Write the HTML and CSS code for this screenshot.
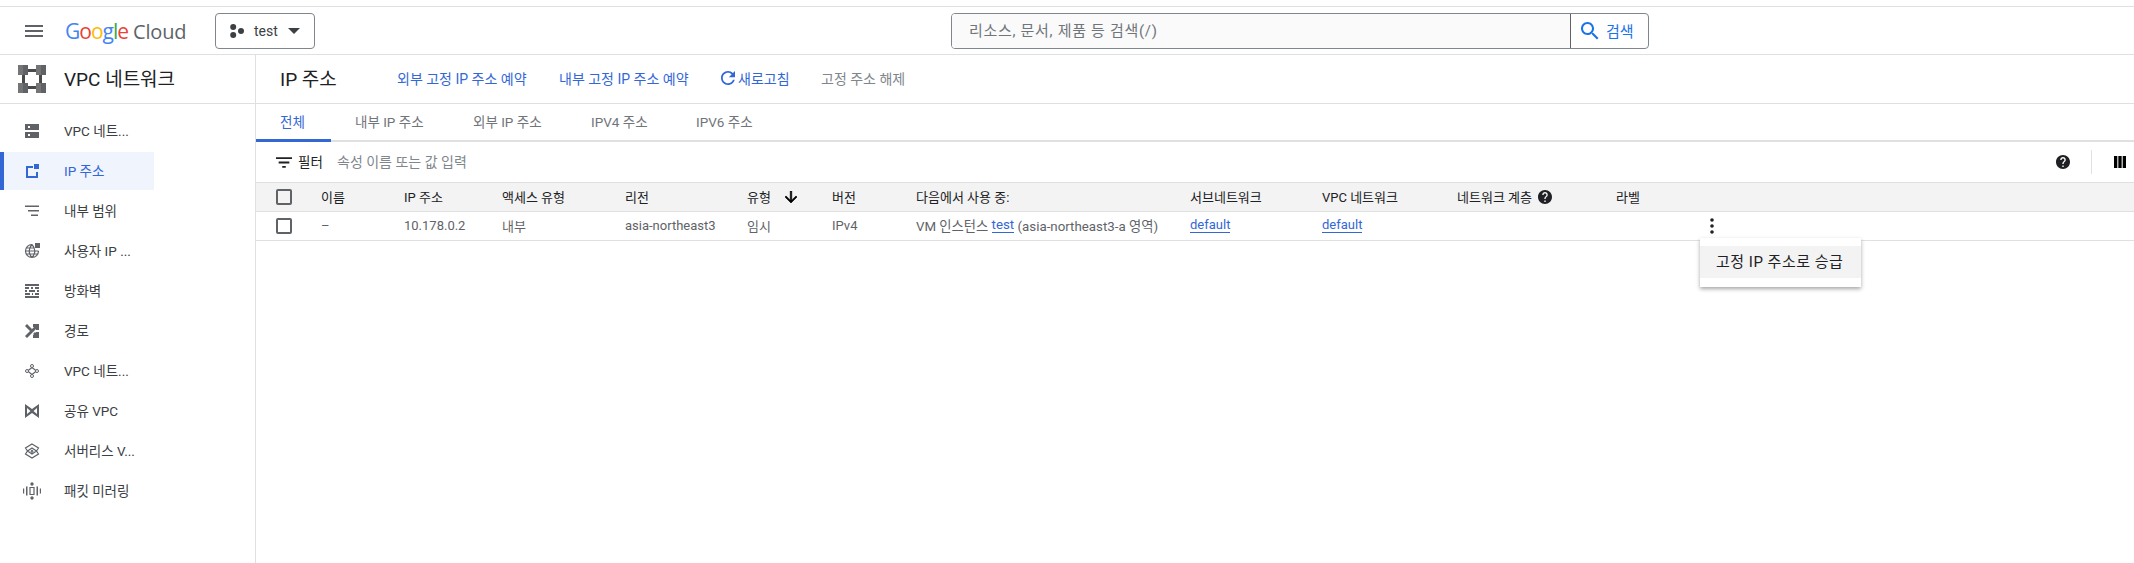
FILE: index.html
```html
<!DOCTYPE html>
<html lang="ko">
<head>
<meta charset="utf-8">
<title>IP 주소</title>
<link rel="stylesheet" href="styles.css">
</head>
<body>
<div class="topgap"></div>
<header class="topbar">
  <svg class="menu-icon" viewBox="0 0 24 24"><path d="M3 18h18v-2H3v2zm0-5h18v-2H3v2zm0-7v2h18V6H3z"/></svg>
  <div class="logo"><span class="g-b">G</span><span class="g-r">o</span><span class="g-y">o</span><span class="g-b">g</span><span class="g-g">l</span><span class="g-r">e</span><span class="logo-cloud">Cloud</span></div>
  <button class="project">
    <svg class="project-dots" viewBox="0 0 14 14"><circle cx="3.200" cy="3" r="3"/><circle cx="3.200" cy="11" r="3"/><circle cx="11" cy="7" r="3"/></svg>
    <span>test</span>
    <svg class="caret" viewBox="0 0 12 6"><path d="M0 0l6 6 6-6z"/></svg>
  </button>
  <div class="search">
    <div class="search-input">리소스, 문서, 제품 등 검색(/)</div>
    <div class="search-btn">
      <svg viewBox="3 3 18 18"><path d="M15.500 14h-.79l-.28-.27C15.410 12.590 16 11.110 16 9.500 16 5.910 13.090 3 9.500 3S3 5.910 3 9.500 5.910 16 9.500 16c1.610 0 3.090-.59 4.230-1.570l.27.28v.79l5 4.990L20.490 19l-4.990-5zm-6 0C7.010 14 5 11.990 5 9.500S7.010 5 9.500 5 14 7.010 14 9.500 11.990 14 9.500 14z"/></svg>
      <span>검색</span>
    </div>
  </div>
</header>
<div class="main">
  <aside class="sidebar">
    <div class="side-head">
      <svg class="vpc-logo" viewBox="0 0 28 28">
        <path class="lg-bar" d="M8 4h12v3H8zM8 21h12v3H8zM4 8h3v12H4zM21 8h3v12h-3z"/>
        <path class="lg-l" d="M0 0h5v10H0zM18 0h5v10h-5zM0 18h5v10H0zM18 18h5v10h-5z"/>
        <path class="lg-d" d="M5 0h5v10H5zM23 0h5v10h-5zM5 18h5v10H5zM23 18h5v10h-5z"/>
      </svg>
      <span>VPC 네트워크</span>
    </div>
    <nav class="nav">
      <div class="nav-item">
        <svg viewBox="0 0 14 14"><path d="M0 0h14v6H0zM3 2v2h2V2zM0 8h14v6H0zM3 10v2h2v-2z" fill-rule="evenodd"/></svg>
        <span>VPC 네트...</span>
      </div>
      <div class="nav-item active">
        <svg viewBox="0 0 14 14"><path d="M1 2h7v2H3v8h8V8h2v6H1zM9 0h5v5H9z"/></svg>
        <span>IP 주소</span>
      </div>
      <div class="nav-item">
        <svg viewBox="0 0 14 14"><path d="M0 1.500h14v1.500H0zM3 6h11v1.500H3zM6 10.500h7V12H6z"/></svg>
        <span>내부 범위</span>
      </div>
      <div class="nav-item nav-wide">
        <svg viewBox="0 0 16 16"><path class="line" d="M14.500 8a6.500 6.500 0 1 1-6.500-6.500M1.500 8h13M2.500 5h8M2.500 11h11M8 1.500c-3.500 4-3.500 9 0 13M8 1.500c3.500 4 3.500 9 0 13"/><path d="M11 0h5v5h-5z"/></svg>
        <span>사용자 IP ...</span>
      </div>
      <div class="nav-item">
        <svg viewBox="0 0 14 14"><path d="M0 0h14v2H0zM0 3h4v2H0zM6 3h2v2H6zM10 3h4v2h-4zM0 6h2v2H0zM4 6h6v2H4zM12 6h2v2h-2zM0 9h5v2H0zM7 9h1v2H7zM10 9h4v2h-4zM0 12h14v2H0z"/></svg>
        <span>방화벽</span>
      </div>
      <div class="nav-item">
        <svg viewBox="0 0 14 14"><path d="M0 2l2-2 5 5-2 2zM0 12l9-9H8V0h6v6h-3V5l-9 9zM8 10l2-2 1 1V8h3v6H8v-3h1z"/></svg>
        <span>경로</span>
      </div>
      <div class="nav-item">
        <svg viewBox="0 0 14 14"><path class="line" d="M7 3.500L2.500 7 7 10.500 11.500 7z"/><circle cx="7" cy="2" r="1.500" class="ring"/><circle cx="2" cy="7" r="1.500" class="ring"/><circle cx="12" cy="7" r="1.500" class="ring"/><circle cx="7" cy="12" r="1.500" class="ring"/></svg>
        <span>VPC 네트...</span>
      </div>
      <div class="nav-item">
        <svg viewBox="0 0 14 14"><path d="M0 0l7 5 7-5v14L7 9l-7 5zM2 4v6l3.500-3zM12 4L8.500 7 12 10z" fill-rule="evenodd"/></svg>
        <span>공유 VPC</span>
      </div>
      <div class="nav-item nav-wide">
        <svg viewBox="0 0 16 16"><path class="line" d="M8 1l6.500 4-2 3 2 3L8 15l-6.500-4 2-3-2-3zM3.500 8L8 5l4.500 3L8 11z"/><path d="M8 6.500l2 2H8.700V11H7.300V8.500H6z"/></svg>
        <span>서버리스 V...</span>
      </div>
      <div class="nav-item nav-xwide">
        <svg viewBox="0 0 18 18"><path d="M0 6.500h1.200v5H0zM16.800 6.500H18v5h-1.200zM3 4.500h1.500v9H3zM13.500 4.500H15v9h-1.500z"/><circle cx="9" cy="2" r="1.700"/><circle cx="9" cy="16" r="1.700"/><path class="line" d="M7 5.500h4v7H7z"/></svg>
        <span>패킷 미러링</span>
      </div>
    </nav>
  </aside>
  <section class="content">
    <div class="title-row">
      <h1>IP 주소</h1>
      <a class="action act-ext">외부 고정 IP 주소 예약</a>
      <a class="action act-int">내부 고정 IP 주소 예약</a>
      <a class="action act-refresh">
        <svg viewBox="4 4 16 16"><path d="M17.650 6.350C16.200 4.900 14.210 4 12 4c-4.420 0-7.990 3.580-7.990 8s3.570 8 7.990 8c3.730 0 6.840-2.550 7.730-6h-2.080c-.82 2.330-3.040 4-5.650 4-3.310 0-6-2.690-6-6s2.690-6 6-6c1.660 0 3.140.69 4.220 1.780L13 11h7V4l-2.350 2.350z"/></svg>
        <span>새로고침</span>
      </a>
      <a class="action disabled">고정 주소 해제</a>
    </div>
    <div class="tabs">
      <div class="tab tab-all selected">전체</div>
      <div class="tab tab-int">내부 IP 주소</div>
      <div class="tab tab-ext">외부 IP 주소</div>
      <div class="tab tab-v4">IPV4 주소</div>
      <div class="tab">IPV6 주소</div>
    </div>
    <div class="filter">
      <svg class="filter-icon" viewBox="3 6 18 12"><path d="M10 18h4v-2h-4v2zM3 6v2h18V6H3zm3 7h12v-2H6v2z"/></svg>
      <span class="filter-label">필터</span>
      <span class="filter-hint">속성 이름 또는 값 입력</span>
      <svg class="help-icon" viewBox="2 2 20 20"><path d="M12 2C6.480 2 2 6.480 2 12s4.480 10 10 10 10-4.480 10-10S17.520 2 12 2zm1 17h-2v-2h2v2zm2.070-7.750l-.9.920C13.450 12.900 13 13.500 13 15h-2v-.5c0-1.100.45-2.100 1.170-2.830l1.240-1.260c.37-.36.59-.86.59-1.410 0-1.100-.9-2-2-2s-2 .9-2 2H8c0-2.210 1.790-4 4-4s4 1.790 4 4c0 .88-.36 1.680-.93 2.250z"/></svg>
      <span class="filter-divider"></span>
      <svg class="col-icon" viewBox="0 0 12 12"><path d="M0 0h3.300v12H0zM4.350 0h3.300v12h-3.300zM8.700 0H12v12H8.700z"/></svg>
    </div>
    <div class="row head">
      <div class="cell check"><span class="checkbox"></span></div>
      <div class="cell">이름</div>
      <div class="cell">IP 주소</div>
      <div class="cell">액세스 유형</div>
      <div class="cell">리전</div>
      <div class="cell">유형<svg class="sort" viewBox="4 4 16 16"><path d="M20 12l-1.410-1.410L13 16.170V4h-2v12.170l-5.580-5.590L4 12l8 8 8-8z"/></svg></div>
      <div class="cell">버전</div>
      <div class="cell">다음에서 사용 중:</div>
      <div class="cell">서브네트워크</div>
      <div class="cell">VPC 네트워크</div>
      <div class="cell">네트워크 계층<svg class="tier-help" viewBox="2 2 20 20"><path d="M12 2C6.480 2 2 6.480 2 12s4.480 10 10 10 10-4.480 10-10S17.520 2 12 2zm1 17h-2v-2h2v2zm2.070-7.750l-.9.920C13.450 12.900 13 13.500 13 15h-2v-.5c0-1.100.45-2.100 1.170-2.830l1.240-1.260c.37-.36.59-.86.59-1.410 0-1.100-.9-2-2-2s-2 .9-2 2H8c0-2.210 1.790-4 4-4s4 1.790 4 4c0 .88-.36 1.680-.93 2.250z"/></svg></div>
      <div class="cell">라벨</div>
      <div class="cell"></div>
    </div>
    <div class="row body-row">
      <div class="cell check"><span class="checkbox"></span></div>
      <div class="cell">–</div>
      <div class="cell">10.178.0.2</div>
      <div class="cell">내부</div>
      <div class="cell">asia-northeast3</div>
      <div class="cell">임시</div>
      <div class="cell">IPv4</div>
      <div class="cell used-by">VM 인스턴스&nbsp;<a class="link">test</a>&nbsp;(asia-northeast3-a 영역)</div>
      <div class="cell"><a class="link">default</a></div>
      <div class="cell"><a class="link">default</a></div>
      <div class="cell"></div>
      <div class="cell"></div>
      <div class="cell kebab-cell">
        <svg class="kebab" viewBox="0 0 4 16"><circle cx="2" cy="2" r="1.800"/><circle cx="2" cy="8" r="1.800"/><circle cx="2" cy="14" r="1.800"/></svg>
      </div>
    </div>
    <div class="popup">
      <div class="popup-item">고정 IP 주소로 승급</div>
    </div>
  </section>
</div>
</body>
</html>
```

FILE: styles.css
```css
* { box-sizing: border-box; }
html, body { height: 100%; }
body {
  margin: 0;
  height: 563px;
  overflow: hidden;
  background: #fff;
  color: #202124;
  font-family: Roboto, "Noto Sans CJK KR", sans-serif;
  font-size: 13px;
  font-weight: 400;
}
svg { display: block; flex: none; }

.topgap { height: 7px; border-bottom: 1px solid #e0e0e0; }

.topbar {
  height: 48px;
  border-bottom: 1px solid #e0e0e0;
  display: flex;
  align-items: center;
  position: relative;
}
.menu-icon { width: 24px; height: 24px; margin-left: 22px; fill: #5f6368; }
.logo {
  margin-left: 19px;
  width: 150px;
  font-family: "Open Sans", Roboto, sans-serif;
  font-size: 21px;
  letter-spacing: -1px;
  white-space: nowrap;
}
.g-b { color: #4285f4; }
.g-r { color: #ea4335; }
.g-y { color: #fbbc04; }
.g-g { color: #34a853; }
.logo-cloud { color: #5f6368; margin-left: 5px; letter-spacing: -0.2px; font-size: 20px; }
.project {
  width: 100px;
  height: 36px;
  padding: 0 14px 0 14px;
  border: 1px solid #80868b;
  border-radius: 4px;
  background: #fff;
  display: flex;
  align-items: center;
  font: inherit;
  font-size: 14px;
  color: #3c4043;
}
.project-dots { width: 14px; height: 14px; fill: #3c4043; margin-right: 10px; }
.caret { width: 12px; height: 6px; margin-left: 10px; fill: #3c4043; }

.search {
  margin-left: 636px;
  width: 698px;
  height: 36px;
  border: 1px solid #80868b;
  border-radius: 4px;
  display: flex;
  overflow: hidden;
}
.search-input {
  width: 619px;
  background: #fafafa;
  border-right: 1px solid #5f6368;
  padding: 0 0 2px 17px;
  display: flex;
  align-items: center;
  font-size: 15px;
  letter-spacing: 0.7px;
  color: #70757a;
}
.search-btn {
  flex: 1;
  display: flex;
  align-items: center;
  padding-left: 10px;
  gap: 7px;
  color: #1a73e8;
  font-size: 15px;
}
.search-btn svg { width: 18px; height: 18px; fill: #1a73e8; }

.main { display: flex; height: 508px; }

.sidebar { width: 256px; flex: none; border-right: 1px solid #e0e0e0; }
.side-head {
  height: 49px;
  border-bottom: 1px solid #e0e0e0;
  display: flex;
  align-items: center;
  padding: 0 0 0 18px;
  font-size: 19px;
  color: #202124;
}
.side-head span { padding-bottom: 4px; }
.vpc-logo { width: 28px; height: 28px; margin-right: 18px; }
.lg-d { fill: #5f6368; }
.lg-l { fill: #757575; }
.lg-bar { fill: #4a4a4a; }

.nav { padding-top: 7px; }
.nav-item {
  width: 154px;
  height: 40px;
  display: flex;
  align-items: center;
  padding-left: 25px;
  font-size: 13.500px;
  color: #3c4043;
  fill: #5f6368;
}
.nav-item span { padding-bottom: 2px; }
.nav-item svg { width: 14px; height: 14px; margin-right: 25px; }
.nav-item.nav-wide { padding-left: 24px; }
.nav-item.nav-wide svg { width: 16px; height: 16px; margin-right: 24px; }
.nav-item.nav-xwide { padding-left: 23px; }
.nav-item.nav-xwide svg { width: 18px; height: 18px; margin-right: 23px; }
.nav-item .line { fill: none; stroke: #5f6368; stroke-width: 1.200; }
.nav-item .ring { fill: #fff; stroke: #5f6368; stroke-width: 1; }
.nav-item.active {
  height: 38px;
  margin: 1px 0;
  border-left: 4px solid #3367d6;
  padding-left: 21px;
  background: #eff4fd;
  color: #3367d6;
  fill: #3367d6;
}

.content { flex: 1; position: relative; min-width: 0; }

.title-row {
  height: 49px;
  border-bottom: 1px solid #e0e0e0;
  display: flex;
  align-items: center;
  padding: 0 0 3px 24px;
}
.title-row h1 {
  margin: 0;
  width: 117px;
  font-size: 19px;
  font-weight: 400;
  color: #202124;
}
.action { color: #3367d6; display: flex; align-items: center; white-space: nowrap; font-size: 14px; }
.act-ext { width: 162px; }
.act-int { width: 162px; }
.act-refresh { width: 100px; }
.act-refresh svg { width: 14px; height: 14px; margin-right: 3px; fill: #3367d6; }
.action.disabled { color: #80868b; }

.tabs {
  height: 38px;
  border-bottom: 2px solid #e0e0e0;
  display: flex;
}
.tab {
  height: 38px;
  padding: 0 0 5px 24px;
  display: flex;
  align-items: center;
  font-size: 13.500px;
  color: #70757a;
  white-space: nowrap;
}
.tab-all { width: 75px; }
.tab-int { width: 118px; }
.tab-ext { width: 118px; }
.tab-v4 { width: 105px; }
.tab.selected { color: #3367d6; border-bottom: 3px solid #3367d6; padding-bottom: 2px; }

.filter {
  height: 40px;
  display: flex;
  align-items: center;
  padding-left: 20px;
}
.filter-icon { width: 16px; height: 11px; fill: #202124; margin-right: 6px; }
.filter-label { color: #202124; width: 39px; font-size: 13.500px; padding-bottom: 2px; }
.filter-hint { color: #80868b; flex: 1; font-size: 14px; padding-bottom: 2px; }
.help-icon { width: 14px; height: 14px; fill: #202124; margin-right: 21px; }
.filter-divider { width: 1px; height: 24px; background: #e0e0e0; margin-right: 22px; }
.col-icon { width: 12px; height: 12px; fill: #000; margin-right: 8px; }

.row {
  display: grid;
  grid-template-columns: 65px 83px 98px 123px 122px 85px 84px 274px 132px 135px 159px 84px 1fr;
  align-items: center;
  border-bottom: 1px solid #e0e0e0;
  white-space: nowrap;
}
.row.head {
  height: 30px;
  border-top: 1px solid #e0e0e0;
  background: #f3f3f3;
  color: #202124;
}
.row.head .cell { padding-bottom: 1px; }
.row.head .cell.check { padding-bottom: 0; }
.row.body-row { height: 29px; color: #5f6368; }
.row.body-row .cell { padding-bottom: 1px; }
.row.body-row .cell.check { padding-bottom: 0; }
.cell { display: flex; align-items: center; min-width: 0; }
.cell.check { padding-left: 20px; }
.cell.used-by { font-size: 13.300px; }
.checkbox {
  width: 16px;
  height: 16px;
  border: 2px solid #5f6368;
  border-radius: 2px;
  background: #fff;
}
.head .checkbox { background: transparent; }
.sort { width: 12px; height: 12px; margin-left: 14px; fill: #000; stroke: #000; stroke-width: 0.800; }
.tier-help { width: 14px; height: 14px; margin-left: 6px; fill: #202124; }
.link { color: #3367d6; border-bottom: 1px solid #3367d6; line-height: 14px; }
.kebab-cell { padding-left: 10px; }
.kebab { width: 4px; height: 16px; fill: #202124; }

.popup {
  position: absolute;
  left: 1444px;
  top: 183px;
  width: 161px;
  height: 49px;
  padding: 8px 0 0;
  background: #fff;
  box-shadow: 0 2px 4px rgba(0, 0, 0, 0.35);
}
.popup-item {
  height: 32px;
  background: #f3f3f3;
  display: flex;
  align-items: center;
  padding: 0 0 4px 16px;
  font-size: 15px;
  letter-spacing: 0.5px;
  color: #202124;
  white-space: nowrap;
}
```
